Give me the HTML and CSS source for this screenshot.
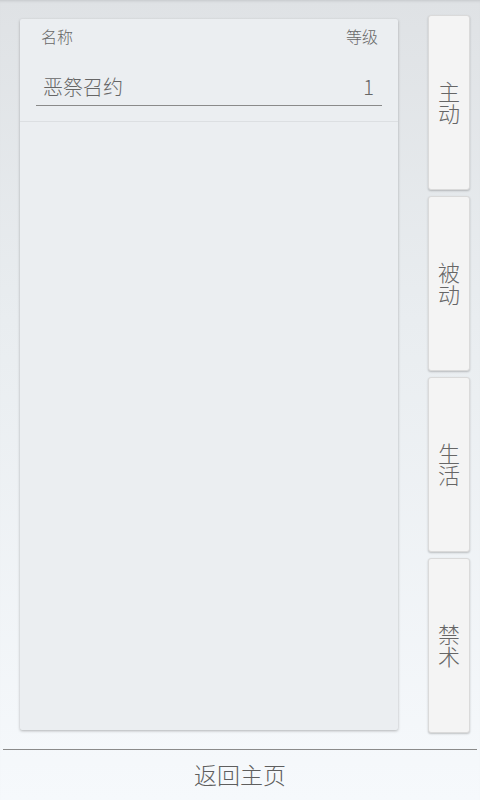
FILE: index.html
```html
<!DOCTYPE html>
<html lang="zh">
<head>
<meta charset="utf-8">
<link rel="stylesheet" href="styles.css">
</head>
<body>
<div class="page">
  <div class="main">
    <div class="card">
      <div class="head">
        <span>名称</span>
        <span>等级</span>
      </div>
      <div class="row">
        <span>恶祭召约</span>
        <span>1</span>
      </div>
      <div class="sep"></div>
    </div>
    <div class="tabs">
      <div class="tab"><span class="vt">主动</span></div>
      <div class="tab"><span class="vt">被动</span></div>
      <div class="tab"><span class="vt">生活</span></div>
      <div class="tab"><span class="vt">禁术</span></div>
    </div>
  </div>
  <div class="footer">返回主页</div>
</div>
</body>
</html>
```

FILE: styles.css
```css
* { box-sizing: border-box; }
html, body {
  margin: 0;
  padding: 0;
}
body {
  width: 480px;
  height: 800px;
  overflow: hidden;
  font-family: "Noto Sans CJK SC", "Noto Sans", sans-serif;
  font-weight: 300;
  color: #666;
  background: linear-gradient(to bottom, #dfe2e5 0%, #e9edf0 40%, #f6f9fc 100%);
}
.page {
  position: relative;
  height: 800px;
  display: flex;
  flex-direction: column;
  box-shadow: inset 0 3px 3px -2px rgba(0,0,0,0.12);
}
.main {
  display: flex;
  padding: 15px 10px 0 20px;
  gap: 30px;
}
.card {
  margin-top: 4px;
  width: 378px;
  height: 711px;
  background: #ebeef1;
  border-radius: 2px;
  box-shadow: 0 1px 3px rgba(0,0,0,0.28);
  display: flex;
  flex-direction: column;
}
.head {
  display: flex;
  justify-content: space-between;
  padding: 7px 20px 0 21px;
  font-size: 16px;
  line-height: 20px;
  color: #686868;
}
.row {
  margin: 29px 16px 0 16px;
  display: flex;
  justify-content: space-between;
  padding: 0 8px 6px 7px;
  font-size: 20px;
  line-height: 24px;
  color: #666;
  border-bottom: 1px solid #8a8a8a;
}
.sep {
  margin-top: 15px;
  border-top: 1px solid #dcdfe2;
}
.tabs {
  display: flex;
  flex-direction: column;
  gap: 6px;
}
.tab {
  width: 42px;
  height: 175px;
  background: #f4f4f4;
  border: 1px solid #dadada;
  border-radius: 3px;
  box-shadow: 0 1px 2px rgba(0,0,0,0.22);
  display: flex;
  align-items: center;
  justify-content: center;
}
.vt {
  writing-mode: vertical-rl;
  text-orientation: upright;
  font-size: 22px;
  line-height: 22px;
  color: #666;
}
.footer {
  margin: 16px 3px 0 3px;
  border-top: 1px solid #8a8a8a;
  flex: 1;
  display: flex;
  align-items: center;
  justify-content: center;
  font-size: 23px;
  color: #5e5e5e;
  padding-bottom: 2px;
}
```
